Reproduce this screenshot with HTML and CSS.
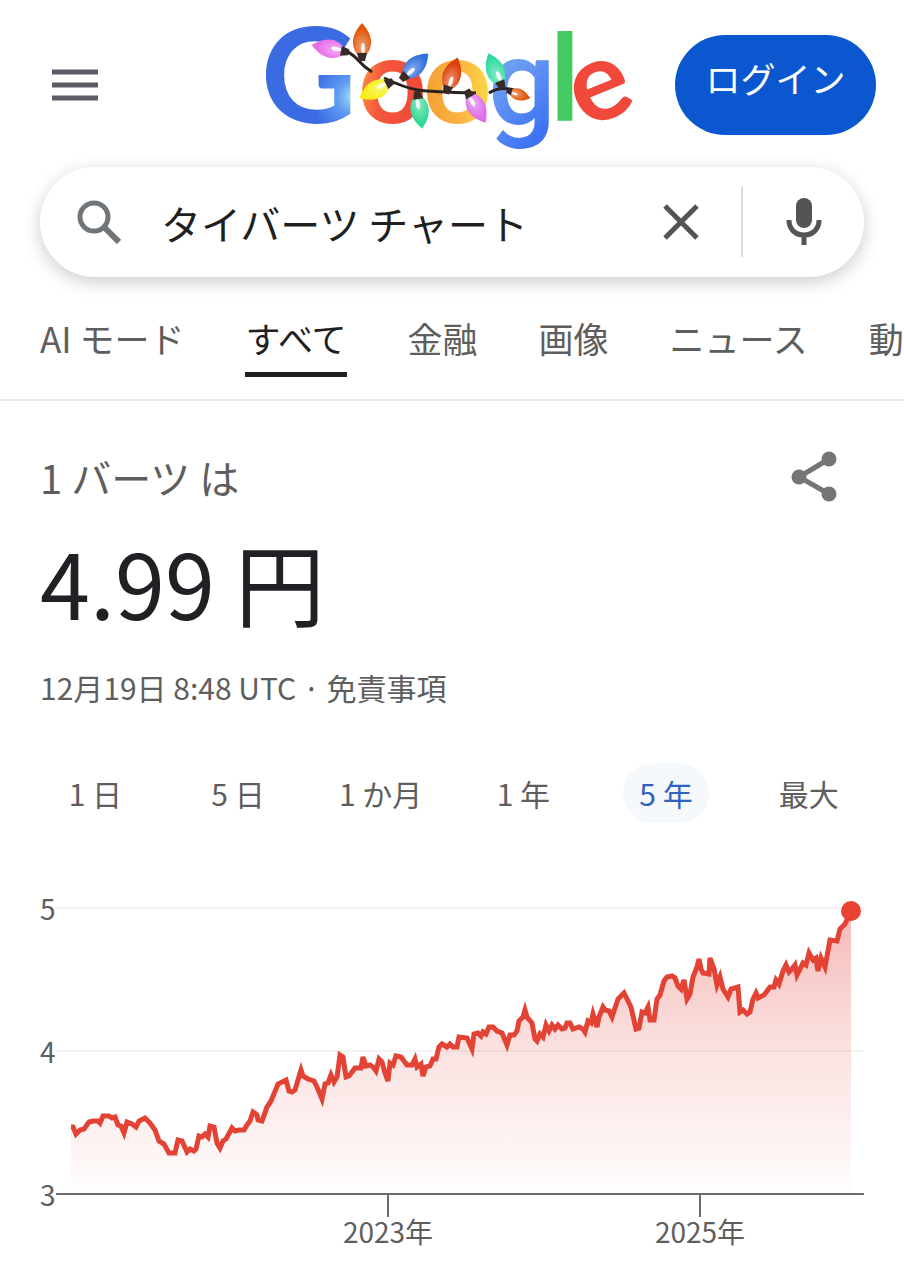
FILE: index.html
```html
<!DOCTYPE html>
<html lang="ja">
<head>
    <meta charset="UTF-8">
    <meta name="viewport" content="width=device-width, initial-scale=1.0">
    <title>タイバーツ チャート - Google 検索</title>
    <link rel="stylesheet" href="styles.css">
</head>
<body>
    <header class="header">
        <button class="icon-btn menu" aria-label="メニュー">
            <svg width="46" height="32" viewBox="0 0 46 32"><path d="M0 3h46M0 16h46M0 29h46" stroke="#5f5b66" stroke-width="5"/></svg>
        </button>

        <a class="logo" href="#" aria-label="Google">
            <svg viewBox="264 16 376 137">
                <defs>
                    <radialGradient id="gBlue" gradientUnits="userSpaceOnUse" cx="354" cy="97" r="42">
                        <stop offset="0" stop-color="#a9e6f7"/><stop offset=".4" stop-color="#5f9df2"/><stop offset="1" stop-color="#3b6be3"/>
                    </radialGradient>
                    <linearGradient id="gRed" x1="0" y1=".4" x2="1" y2=".7">
                        <stop offset="0" stop-color="#ff9a45"/><stop offset=".35" stop-color="#f4573d"/><stop offset="1" stop-color="#ee4636"/>
                    </linearGradient>
                    <linearGradient id="gYellow" x1="0" y1="0" x2="1" y2="0">
                        <stop offset="0" stop-color="#f0a032"/><stop offset=".5" stop-color="#fbb143"/><stop offset="1" stop-color="#fbdc42"/>
                    </linearGradient>
                    <linearGradient id="gBlue2" x1="0" y1="0" x2=".5" y2="1">
                        <stop offset=".1" stop-color="#52bfdc"/><stop offset=".45" stop-color="#6c9df2"/><stop offset="1" stop-color="#3d73f2"/>
                    </linearGradient>
                    <radialGradient id="shine" cx=".5" cy=".78" r=".6">
                        <stop offset="0" stop-color="#fff" stop-opacity=".45"/><stop offset="1" stop-color="#fff" stop-opacity="0"/>
                    </radialGradient>
                    <g id="bulb">
                        <path d="M-5 0C-13-11-8-22 0-31C8-22 13-11 5 0Z"/>
                        <path d="M-5 0C-13-11-8-22 0-31C8-22 13-11 5 0Z" fill="url(#shine)"/>
                        <ellipse cx="1" cy="-6" rx="2" ry="5" fill="#fff" opacity=".9"/>
                        <path d="M-5-1H5L3 7H-3Z" fill="#3a2a26"/>
                    </g>
                </defs>
                <text class="letter cap" x="261" y="123" fill="url(#gBlue)">G</text>
                <text class="letter" x="358" y="123" fill="url(#gRed)">o</text>
                <text class="letter" x="423" y="123" fill="url(#gYellow)">o</text>
                <text class="letter tail" x="488" y="124" fill="url(#gBlue2)">g</text>
                <text class="letter" x="550" y="121" fill="#44cc62">l</text>
                <text class="letter e" transform="translate(584 129) rotate(-22)" fill="#f0483a">e</text>

                <g fill="none" stroke="#2b2220" stroke-width="3">
                    <path d="M341 49Q352 53 358 60T372 72"/>
                    <path d="M384 78Q405 88 418 90T476 93"/>
                    <path d="M489 93Q500 86 514 90"/>
                </g>
                <use href="#bulb" transform="translate(342 51) rotate(-79)" fill="#e86be8"/>
                <use href="#bulb" transform="translate(362 54)" fill="#e2560a"/>
                <use href="#bulb" transform="translate(406 75) rotate(46)" fill="#2f6edc"/>
                <use href="#bulb" transform="translate(387 84) rotate(-117)" fill="#f8ee10"/>
                <use href="#bulb" transform="translate(418 98) rotate(172)" fill="#2fd894"/>
                <use href="#bulb" transform="translate(448 87) rotate(18)" fill="#dc3c06"/>
                <use href="#bulb" transform="translate(470 96) rotate(150)" fill="#dd6bea"/>
                <use href="#bulb" transform="translate(500 82) rotate(-22)" fill="#2fdca0"/>
                <use href="#bulb" transform="translate(511 92) rotate(108) scale(.65)" fill="#e0560a"/>
            </svg>
        </a>

        <button class="login">ログイン</button>
    </header>

    <form class="search" role="search">
        <svg class="lens" width="44" height="44" viewBox="0 0 44 44" fill="none" stroke="#70757a">
            <circle cx="17" cy="17" r="14" stroke-width="5"/>
            <path d="M27 27L42 42" stroke-width="6"/>
        </svg>
        <input type="text" aria-label="検索" value="タイバーツ チャート">
        <button type="button" class="icon-btn" aria-label="クリア">
            <svg width="36" height="36" viewBox="0 0 36 36"><path d="M2 2L34 34M34 2L2 34" stroke="#545454" stroke-width="5"/></svg>
        </button>
        <span class="divider"></span>
        <button type="button" class="icon-btn" aria-label="音声検索">
            <svg width="36" height="50" viewBox="0 0 36 50">
                <rect x="10" y="1" width="16" height="30" rx="8" fill="#545454"/>
                <path d="M3 23C3 32 9 38 18 38S33 32 33 23M18 38V48" fill="none" stroke="#545454" stroke-width="5"/>
            </svg>
        </button>
    </form>

    <nav class="tabs">
        <a href="#">AI モード</a>
        <a href="#" class="active">すべて</a>
        <a href="#">金融</a>
        <a href="#">画像</a>
        <a href="#">ニュース</a>
        <a href="#">動画</a>
    </nav>

    <main>
        <div class="rate">
            <div class="rate-top">
                <h2>1 バーツ は</h2>
                <button class="icon-btn" aria-label="共有">
                    <svg width="46" height="52" viewBox="0 0 46 52" fill="#757575">
                        <path d="M38 8L8 26L38 43" fill="none" stroke="#757575" stroke-width="5"/>
                        <circle cx="38" cy="8" r="7.5"/><circle cx="8" cy="26" r="7.5"/><circle cx="38" cy="43" r="7.5"/>
                    </svg>
                </button>
            </div>
            <p class="price">4.99 円</p>
            <p class="date">12月19日 8:48 UTC · <a href="#">免責事項</a></p>
        </div>

        <div class="ranges">
            <button>1 日</button>
            <button>5 日</button>
            <button>1 か月</button>
            <button>1 年</button>
            <button class="active">5 年</button>
            <button>最大</button>
        </div>

        <svg class="chart" viewBox="0 870 904 410" role="img" aria-label="過去5年の為替チャート">
            <defs>
                <linearGradient id="fade" gradientUnits="userSpaceOnUse" x1="0" y1="911" x2="0" y2="1194">
                    <stop offset="0" stop-color="#e2403a" stop-opacity=".36"/>
                    <stop offset=".5" stop-color="#e2403a" stop-opacity=".15"/>
                    <stop offset="1" stop-color="#e2403a" stop-opacity=".01"/>
                </linearGradient>
            </defs>
            <path d="M56 908H864M56 1051H864" stroke="#f3f3f3" stroke-width="2"/>
            <polygon id="area" fill="url(#fade)"/>
            <path d="M56 1194H864M388 1194V1217M700 1194V1217" fill="none" stroke="#6b6e70" stroke-width="2"/>
            <polyline id="line" fill="none" stroke="#e24335" stroke-width="5"/>
            <circle cx="851" cy="911" r="10" fill="#ea4335"/>
            <text x="40" y="920">5</text>
            <text x="40" y="1063">4</text>
            <text x="40" y="1206">3</text>
            <text class="year" x="388" y="1243">2023年</text>
            <text class="year" x="700" y="1243">2025年</text>
        </svg>
    </main>

<script>
    const points = `71,1127 73,1127 76,1134 80,1130 84,1129 89,1122 93,1121 98,1121 100,1123 103,1116 109,1116 112,1118 115,1117 118,1125
        121,1126 124,1133 127,1122 132,1124 136,1127 139,1121 145,1118 150,1123 155,1130 159,1141 164,1144 169,1153 175,1153 178,1140
        182,1141 187,1152 190,1149 194,1151 196,1149 199,1136 202,1137 205,1134 208,1137 210,1126 214,1127 217,1143 220,1148 223,1141
        226,1139 232,1128 235,1131 239,1130 244,1130 247,1125 250,1121 253,1112 257,1115 258,1120 262,1121 267,1107 271,1101 278,1084
        286,1080 289,1091 292,1092 295,1090 301,1070 303,1076 308,1079 314,1081 317,1087 322,1099 325,1084 328,1083 331,1075 334,1082
        337,1077 340,1055 343,1057 346,1077 349,1076 355,1068 361,1068 363,1057 366,1066 370,1065 373,1067 376,1071 379,1059 382,1062
        385,1073 388,1081 390,1063 393,1065 396,1056 401,1057 407,1065 412,1065 415,1059 417,1067 421,1064 423,1076 426,1067 430,1066
        433,1059 436,1059 439,1047 442,1044 447,1047 450,1044 453,1047 457,1047 459,1037 467,1038 472,1049 474,1034 478,1033 481,1036
        483,1032 486,1034 489,1027 493,1027 497,1031 502,1033 507,1045 510,1035 514,1035 517,1031 519,1021 523,1017 525,1010 527,1017
        532,1023 535,1039 537,1041 540,1034 543,1037 546,1025 549,1031 552,1025 555,1029 558,1025 562,1029 565,1028 567,1023 570,1023
        573,1029 579,1027 583,1029 585,1032 588,1021 591,1023 593,1014 597,1027 599,1017 603,1007 605,1010 609,1011 612,1017 618,999
        624,993 627,999 631,1007 636,1029 639,1028 642,1012 645,1013 648,1007 650,1020 654,1020 657,999 660,995 664,981 667,977 672,976
        675,978 678,986 681,989 684,980 687,999 690,994 693,977 697,967 699,959 701,969 703,973 709,974 710,958 714,969 717,985 720,977
        723,989 728,997 731,989 738,987 740,1012 743,1010 747,1014 750,1012 753,999 756,993 758,998 764,995 770,987 774,987 776,980
        779,984 783,971 786,965 789,972 792,969 795,965 797,975 803,963 806,965 809,953 813,960 816,958 818,971 821,958 825,967 830,940
        837,941 840,929 845,924 851,911`;

    document.getElementById('line').setAttribute('points', points);
    document.getElementById('area').setAttribute('points', points + ' 851,1194 71,1194');
</script>
</body>
</html>
```
FILE: styles.css
```css
* { box-sizing: border-box; }

body {
    margin: 0;
    background: #fff;
    color: #1f1f1f;
    font-family: 'Noto Sans CJK JP', sans-serif;
    overflow-x: hidden;
}

button, input { font-family: inherit; }

a { color: inherit; text-decoration: none; }

svg { display: block; }

.icon-btn { padding: 0; border: none; background: none; cursor: pointer; }

.header {
    display: grid;
    grid-template-columns: 1fr 376px 1fr;
    align-items: center;
    padding: 16px 28px 0;
}

.menu { justify-self: start; margin-left: 24px; }

.logo svg { overflow: visible; }

.letter { font-family: Lato, sans-serif; font-weight: 700; font-size: 120px; }
.letter.cap { font-size: 132px; }
.letter.tail { font-family: Roboto, sans-serif; font-weight: 500; }
.letter.e { font-size: 112px; }

.login {
    justify-self: end;
    width: 201px;
    height: 100px;
    padding: 0 0 14px;
    border: none;
    border-radius: 50px;
    background: #0b57d0;
    color: #fff;
    font-size: 35px;
    cursor: pointer;
}

.search {
    display: flex;
    align-items: center;
    height: 110px;
    margin: 14px 40px 0;
    padding: 0 42px 0 37px;
    border-radius: 55px;
    background: #fff;
    box-shadow: 0 5px 18px rgba(0, 0, 0, 0.2);
}

.search input {
    flex: 1;
    min-width: 0;
    margin-left: 40px;
    padding: 2px 0 0;
    border: none;
    outline: none;
    background: none;
    color: #1f1f1f;
    font-size: 40px;
}

.divider { width: 2px; height: 70px; margin: 0 43px 0 42px; background: #dadce0; }

.tabs {
    display: flex;
    gap: 61px;
    margin-top: 36px;
    padding: 0 0 22px 40px;
    border-bottom: 2px solid #ebebeb;
    overflow: hidden;
    white-space: nowrap;
}

.tabs a {
    padding-bottom: 9px;
    border-bottom: 5px solid transparent;
    color: #5e5e5e;
    font-size: 35px;
    line-height: 50px;
}

.tabs .active { color: #1f1f1f; border-color: #1f1f1f; }

.rate { padding: 46px 40px 0; }

.rate-top { display: flex; justify-content: space-between; align-items: center; padding-right: 27px; }

.rate h2 { margin: 0; color: #5e5e5e; font-size: 40px; font-weight: 400; line-height: 60px; }

.price { margin: 14px 0 0; color: #202124; font-size: 90px; line-height: 120px; }

.date { margin: 24px 0 0; color: #5e5e5e; font-size: 30px; line-height: 44px; }

.ranges {
    display: grid;
    grid-template-columns: repeat(6, 1fr);
    justify-items: center;
    margin: 54px 24px 0;
}

.ranges button {
    height: 60px;
    padding: 0 16px;
    border: none;
    border-radius: 30px;
    background: none;
    color: #5e5e5e;
    font-size: 30px;
    cursor: pointer;
}

.ranges .active { background: #f6f9fc; color: #3062c0; }

.chart { width: 100%; margin-top: 47px; }

.chart text { fill: #5e5e5e; font-size: 28px; }

.chart .year { text-anchor: middle; }
```
